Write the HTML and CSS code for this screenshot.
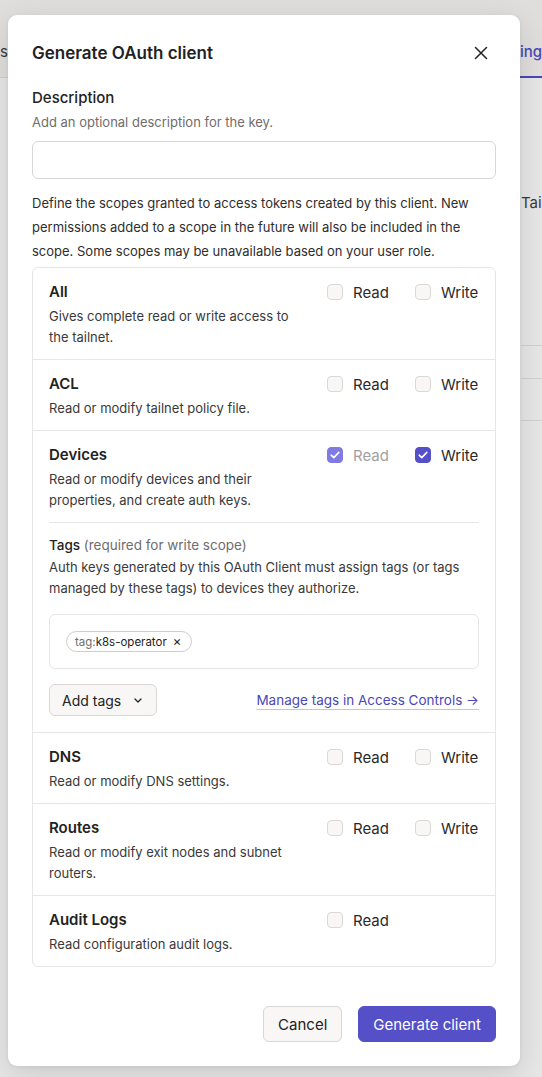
FILE: index.html
```html
<!DOCTYPE html>
<html lang="en">
<head>
<meta charset="utf-8">
<title>Generate OAuth client</title>
<link rel="stylesheet" href="styles.css">
</head>
<body>
<div class="page">
  <div class="page-header">
    <span class="tab">s</span>
    <span class="tab tab-active">ing</span>
  </div>
  <div class="page-body">
    <div class="page-label">Tai</div>
    <div class="page-rows">
      <div class="page-row r1"></div>
      <div class="page-row r2"></div>
      <div class="page-row r3"></div>
    </div>
  </div>
</div>

<div class="modal">
  <div class="modal-head">
    <h1 class="modal-title">Generate OAuth client</h1>
    <button class="close" aria-label="Close">
      <svg width="14" height="14" viewBox="0 0 14 14"><path d="M1.5 1.5L12.5 12.5M12.5 1.5L1.5 12.5" stroke="#232222" stroke-width="1.5" stroke-linecap="round"/></svg>
    </button>
  </div>

  <div class="field">
    <div class="field-label">Description</div>
    <div class="field-help">Add an optional description for the key.</div>
    <div class="input"></div>
  </div>

  <p class="intro">Define the scopes granted to access tokens created by this client. New permissions added to a scope in the future will also be included in the scope. Some scopes may be unavailable based on your user role.</p>

  <div class="scopes">
    <div class="scope">
      <div class="scope-main">
        <div class="scope-info">
          <div class="scope-title">All</div>
          <div class="scope-desc">Gives complete read or write access to the tailnet.</div>
        </div>
        <div class="scope-ctrls">
          <label class="chk"><span class="box"></span><span>Read</span></label>
          <label class="chk"><span class="box"></span><span>Write</span></label>
        </div>
      </div>
    </div>

    <div class="scope">
      <div class="scope-main">
        <div class="scope-info">
          <div class="scope-title">ACL</div>
          <div class="scope-desc">Read or modify tailnet policy file.</div>
        </div>
        <div class="scope-ctrls">
          <label class="chk"><span class="box"></span><span>Read</span></label>
          <label class="chk"><span class="box"></span><span>Write</span></label>
        </div>
      </div>
    </div>

    <div class="scope">
      <div class="scope-main">
        <div class="scope-info">
          <div class="scope-title">Devices</div>
          <div class="scope-desc">Read or modify devices and their properties, and create auth keys.</div>
        </div>
        <div class="scope-ctrls">
          <label class="chk chk-disabled"><span class="box box-on box-dis"><svg width="10" height="8" viewBox="0 0 10 8"><path d="M1.2 4.2L3.8 6.6L8.8 1.4" fill="none" stroke="#fff" stroke-width="1.6" stroke-linecap="round" stroke-linejoin="round"/></svg></span><span>Read</span></label>
          <label class="chk"><span class="box box-on"><svg width="10" height="8" viewBox="0 0 10 8"><path d="M1.2 4.2L3.8 6.6L8.8 1.4" fill="none" stroke="#fff" stroke-width="1.6" stroke-linecap="round" stroke-linejoin="round"/></svg></span><span>Write</span></label>
        </div>
      </div>
      <div class="tags">
        <div class="tags-label">Tags <span class="muted">(required for write scope)</span></div>
        <div class="tags-desc">Auth keys generated by this OAuth Client must assign tags (or tags managed by these tags) to devices they authorize.</div>
        <div class="tags-box">
          <span class="chip"><span class="chip-pre">tag:</span>k8s-operator<span class="chip-x">×</span></span>
        </div>
        <div class="tags-actions">
          <button class="btn-sm">Add tags
            <svg width="8" height="5" viewBox="0 0 8 5"><path d="M1 1L4 4L7 1" fill="none" stroke="#232222" stroke-width="1.3" stroke-linecap="round" stroke-linejoin="round"/></svg>
          </button>
          <a class="link" href="#">Manage tags in Access Controls →</a>
        </div>
      </div>
    </div>

    <div class="scope">
      <div class="scope-main">
        <div class="scope-info">
          <div class="scope-title">DNS</div>
          <div class="scope-desc">Read or modify DNS settings.</div>
        </div>
        <div class="scope-ctrls">
          <label class="chk"><span class="box"></span><span>Read</span></label>
          <label class="chk"><span class="box"></span><span>Write</span></label>
        </div>
      </div>
    </div>

    <div class="scope">
      <div class="scope-main">
        <div class="scope-info">
          <div class="scope-title">Routes</div>
          <div class="scope-desc">Read or modify exit nodes and subnet routers.</div>
        </div>
        <div class="scope-ctrls">
          <label class="chk"><span class="box"></span><span>Read</span></label>
          <label class="chk"><span class="box"></span><span>Write</span></label>
        </div>
      </div>
    </div>

    <div class="scope">
      <div class="scope-main">
        <div class="scope-info">
          <div class="scope-title">Audit Logs</div>
          <div class="scope-desc">Read configuration audit logs.</div>
        </div>
        <div class="scope-ctrls">
          <label class="chk"><span class="box"></span><span>Read</span></label>
        </div>
      </div>
    </div>
  </div>

  <div class="footer">
    <button class="btn btn-secondary">Cancel</button>
    <button class="btn btn-primary">Generate client</button>
  </div>
</div>
</body>
</html>
```

FILE: styles.css
```css
* { box-sizing: border-box; }
html, body { margin: 0; padding: 0; }
body {
  width: 542px;
  height: 1077px;
  overflow: hidden;
  font-family: Inter, "Noto Sans", "Liberation Sans", sans-serif;
  color: #232222;
  background: #e6e6e6;
  position: relative;
}

/* background page */
.page { height: 1077px; }
.page-header {
  height: 78px;
  background: #dfdedd;
  border-bottom: 1px solid #d0cfce;
  display: flex;
  justify-content: space-between;
  align-items: stretch;
}
.tab {
  font-size: 15px;
  color: #3a3939;
  padding-top: 40px;
  line-height: 24px;
}
.tab-active {
  color: #4b47b5;
  font-weight: 500;
  border-bottom: 2px solid #4b47b5;
  padding-left: 2px;
  margin-bottom: -1px;
}
.page-body { padding-left: 521px; padding-top: 114px; }
.page-label { font-size: 15px; color: #3a3939; line-height: 22px; white-space: nowrap; }
.page-rows { margin-top: 131px; }
.page-row { border-top: 1px solid #d2d1d0; }
.r1 { height: 33px; }
.r2 { height: 42px; }
.r3 { height: 10px; }

/* modal */
.modal {
  position: absolute;
  left: 8px;
  top: 15px;
  width: 512px;
  height: 1051px;
  background: #fff;
  border-radius: 9px;
  box-shadow: 0 8px 28px rgba(0,0,0,0.12), 0 1px 4px rgba(0,0,0,0.06);
  padding: 26px 24px 24px 24px;
}
.modal-head {
  display: flex;
  justify-content: space-between;
  align-items: center;
  height: 24px;
}
.modal-title {
  margin: 0;
  font-size: 17px;
  font-weight: 600;
  line-height: 24px;
}
.close {
  border: 0;
  background: none;
  padding: 0;
  width: 14px;
  height: 14px;
  margin-right: 8px;
  display: flex;
}

.field { margin-top: 21px; }
.field-label { font-size: 15px; font-weight: 500; line-height: 24px; }
.field-help { font-size: 13px; color: #6f6d6c; line-height: 21px; margin-top: 2px; }
.input {
  margin-top: 8px;
  height: 38px;
  border: 1px solid #dad7d4;
  border-radius: 6px;
}

.intro {
  margin: 12px 0 4px;
  font-size: 13px;
  line-height: 24px;
  color: #2e2d2d;
}

.scopes {
  border: 1px solid #e8e6e4;
  border-radius: 6px;
}
.scope { padding: 12px 16px 11px; border-top: 1px solid #e8e6e4; }
.scope:first-child { border-top: 0; }
.scope-main { display: flex; gap: 16px; }
.scope-info { flex: 1; min-width: 0; }
.scope-title { font-size: 15px; font-weight: 600; line-height: 24px; }
.scope-desc { font-size: 13px; line-height: 21px; margin-top: 2px; color: #3a3939; }
.scope-ctrls {
  width: 152px;
  display: grid;
  grid-template-columns: 88px 64px;
  align-content: start;
}
.chk {
  display: flex;
  align-items: center;
  gap: 10px;
  height: 24px;
  font-size: 15px;
  color: #2a2929;
}
.box {
  width: 16px;
  height: 16px;
  border: 1px solid #dcd8d5;
  background: #f8f7f6;
  border-radius: 4px;
  display: flex;
  align-items: center;
  justify-content: center;
  flex: none;
}
.box-on { background: #5650c8; border-color: #5650c8; }
.box-dis { background: #7f7be3; border-color: #7f7be3; }
.chk-disabled { color: #a3a1a0; }

.tags {
  margin-top: 11px;
  border-top: 1px solid #e8e6e4;
  padding-top: 10px;
  padding-bottom: 5px;
}
.tags-label { font-size: 13.5px; line-height: 24px; font-weight: 500; }
.muted { color: #6f6d6c; font-weight: 400; }
.tags-desc { font-size: 13px; line-height: 21px; margin-top: 0; color: #3a3939; }
.tags-box {
  margin-top: 15px;
  height: 55px;
  border: 1px solid #e8e6e4;
  border-radius: 6px;
  padding: 0 16px;
  display: flex;
  align-items: center;
}
.chip {
  display: inline-flex;
  align-items: center;
  height: 21px;
  padding: 0 10px 0 8px;
  border: 1px solid #cfccc9;
  border-radius: 999px;
  font-size: 11.5px;
  color: #232222;
}
.chip-pre { color: #6f6d6c; }
.chip-x { margin-left: 6px; font-size: 13px; line-height: 1; }
.tags-actions {
  margin-top: 15px;
  display: flex;
  justify-content: space-between;
  align-items: center;
}
.btn-sm {
  height: 32px;
  padding: 0 14px 0 12px;
  border: 1px solid #dad6d3;
  background: #f8f7f6;
  border-radius: 6px;
  font-family: inherit;
  font-size: 14px;
  color: #232222;
  display: flex;
  align-items: center;
  gap: 13px;
}
.link {
  font-size: 13.5px;
  color: #4b47b5;
  text-decoration: underline;
  text-decoration-color: #c3c0f3;
  text-underline-offset: 4px;
}

.footer {
  margin-top: 39px;
  display: flex;
  justify-content: flex-end;
  gap: 16px;
}
.btn {
  height: 36px;
  border-radius: 6px;
  font-family: inherit;
  font-size: 15px;
  padding: 0 14px;
}
.btn-secondary {
  background: #f8f7f6;
  border: 1px solid #dad6d3;
  color: #232222;
}
.btn-primary {
  background: #5650c8;
  border: 1px solid #5650c8;
  color: #fff;
}
```
